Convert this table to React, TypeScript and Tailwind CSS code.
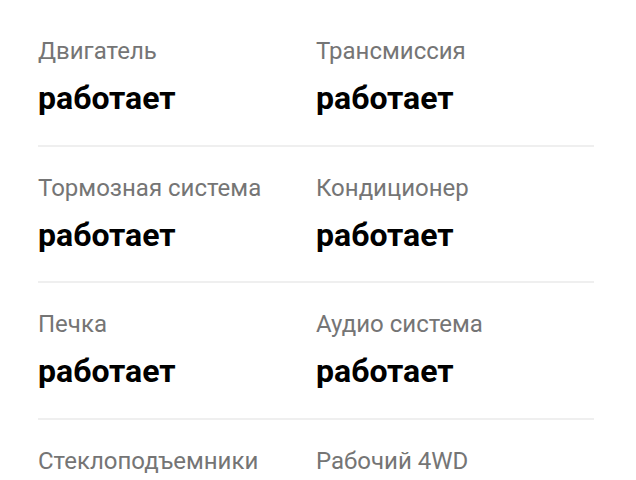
import React from "react";

const rows: [string, string][][] = [
  [["Двигатель", "работает"], ["Трансмиссия", "работает"]],
  [["Тормозная система", "работает"], ["Кондиционер", "работает"]],
  [["Печка", "работает"], ["Аудио система", "работает"]],
  [["Стеклоподъемники", "работает"], ["Рабочий 4WD", "работает"]],
];

export default function App() {
  return (
    <div className="w-[636px] h-[480px] overflow-hidden bg-white" style={{ fontFamily: "Roboto, 'Noto Sans', sans-serif" }}>
      <div className="ml-[38px] w-[556px] pt-[10px]">
        {rows.map((row, i) => (
          <div key={i} className={i > 0 ? "border-t-2 border-[#efefef]" : ""}>
            <div className="grid grid-cols-[278px_1fr] pt-[27px] pb-[28.5px]">
              {row.map(([label, value]) => (
                <div key={label} className="flex flex-col">
                  <div className="text-[24px] leading-[28px] text-[#757575]">{label}</div>
                  <div className="mt-[15px] text-[32px] leading-[36px] font-bold text-black">{value}</div>
                </div>
              ))}
            </div>
          </div>
        ))}
      </div>
    </div>
  );
}
